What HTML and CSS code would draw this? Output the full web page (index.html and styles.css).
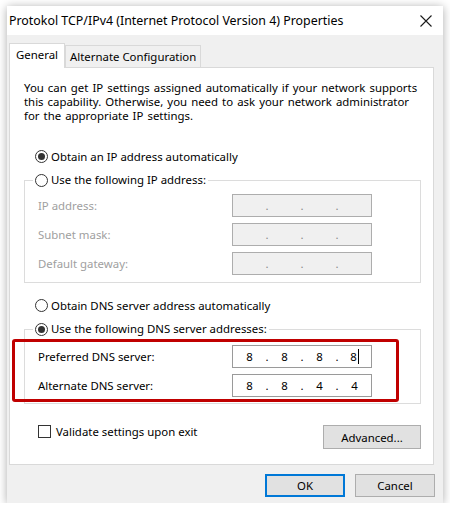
FILE: index.html
```html
<!DOCTYPE html>
<html>
<head>
<meta charset="utf-8">
<link rel="stylesheet" href="styles.css">
</head>
<body>
<div class="window">
  <div class="titlebar">
    <span class="title">Protokol TCP/IPv4 (Internet Protocol Version 4) Properties</span>
    <svg class="close" width="12" height="12" viewBox="0 0 12 12"><path d="M0.5 0.5L11.5 11.5M11.5 0.5L0.5 11.5" stroke="#1a1a1a" stroke-width="1.1" fill="none"/></svg>
  </div>
  <div class="body">
    <div class="tabs">
      <div class="tab active">General</div>
      <div class="tab">Alternate Configuration</div>
    </div>
    <div class="panel">
      <p class="intro">You can get IP settings assigned automatically if your network supports<br>this capability. Otherwise, you need to ask your network administrator<br>for the appropriate IP settings.</p>

      <div class="opt top1"><span class="radio checked"></span><span>Obtain an IP address automatically</span></div>

      <fieldset class="group g1">
        <legend><span class="opt"><span class="radio"></span><span>Use the following IP address:</span></span></legend>
        <div class="rows">
          <div class="field disabled"><span class="label">IP address:</span><span class="ip off"><span class="seg"></span><span class="dot">.</span><span class="seg"></span><span class="dot">.</span><span class="seg"></span><span class="dot">.</span><span class="seg"></span></span></div>
          <div class="field disabled"><span class="label">Subnet mask:</span><span class="ip off"><span class="seg"></span><span class="dot">.</span><span class="seg"></span><span class="dot">.</span><span class="seg"></span><span class="dot">.</span><span class="seg"></span></span></div>
          <div class="field disabled"><span class="label">Default gateway:</span><span class="ip off"><span class="seg"></span><span class="dot">.</span><span class="seg"></span><span class="dot">.</span><span class="seg"></span><span class="dot">.</span><span class="seg"></span></span></div>
        </div>
      </fieldset>

      <div class="opt top3"><span class="radio"></span><span>Obtain DNS server address automatically</span></div>

      <fieldset class="group g2">
        <legend><span class="opt"><span class="radio checked"></span><span>Use the following DNS server addresses:</span></span></legend>
        <div class="highlight">
          <div class="field"><span class="label">Preferred DNS server:</span><span class="ip"><span class="seg">8</span><span class="dot">.</span><span class="seg">8</span><span class="dot">.</span><span class="seg">8</span><span class="dot">.</span><span class="seg">8<span class="caret"></span></span></span></div>
          <div class="field"><span class="label">Alternate DNS server:</span><span class="ip"><span class="seg">8</span><span class="dot">.</span><span class="seg">8</span><span class="dot">.</span><span class="seg">4</span><span class="dot">.</span><span class="seg">4</span></span></div>
        </div>
      </fieldset>

      <div class="bottom-row">
        <div class="check"><span class="box"></span><span>Validate settings upon exit</span></div>
        <button class="btn adv">Advanced...</button>
      </div>
    </div>
    <div class="buttons">
      <button class="btn default">OK</button>
      <button class="btn">Cancel</button>
    </div>
  </div>
</div>
</body>
</html>
```

FILE: styles.css
```css
* { box-sizing: border-box; }
html, body { margin: 0; padding: 0; background: #fff; }
body {
  font-family: "Noto Sans", "Segoe UI", sans-serif;
  font-size: 11.4px;
  color: #000;
}
.window {
  margin: 6px 0 0 7px;
  width: 436px;
  height: 497px;
  background: #f0f0f0;
  box-shadow: 0 1px 9px rgba(0,0,0,0.33);
  display: flex;
  flex-direction: column;
}
.titlebar {
  height: 29px;
  background: #fff;
  display: flex;
  align-items: center;
  justify-content: space-between;
  padding: 0 11px 0 2px;
}
.title { font-size: 12.4px; color: #000; }
.close { display: block; }
.body {
  flex: 1;
  padding: 8px 9px 6px 2px;
  display: flex;
  flex-direction: column;
}
.tabs {
  display: flex;
  align-items: flex-end;
  height: 25px;
  margin-bottom: -1px;
  position: relative;
  z-index: 1;
}
.tab {
  height: 22px;
  margin-bottom: 1px;
  border: 1px solid #d9d9d9;
  border-bottom: none;
  padding: 0 4px;
  line-height: 21px;
  background: #f0f0f0;
}
.tab.active {
  height: 25px;
  margin-bottom: 0;
  background: #fff;
  padding: 0 6px;
  line-height: 22px;
}
.panel {
  height: 398px;
  background: #fff;
  border: 1px solid #d9d9d9;
  padding: 13px 12px 0 14px;
}
.intro {
  margin: 0;
  line-height: 14px;
  white-space: nowrap;
  word-spacing: 1.1px;
}
.opt {
  display: flex;
  align-items: center;
  height: 16px;
  gap: 3px;
  white-space: nowrap;
}
.top1 { margin-top: 25px; padding-left: 11px; }
.top3 { margin-top: 14px; padding-left: 11px; }
.radio {
  width: 13px;
  height: 13px;
  border: 1px solid #333;
  border-radius: 50%;
  display: flex;
  align-items: center;
  justify-content: center;
  flex: none;
  background: #fff;
}
.radio.checked::after {
  content: "";
  width: 7px;
  height: 7px;
  border-radius: 50%;
  background: #333;
}
.group {
  margin: 8px 0 0 0;
  border: 1px solid #dcdcdc;
  padding: 0;
  min-width: 0;
}
.group legend {
  margin-left: 8px;
  padding: 0 2px;
  line-height: 16px;
}
.g1 .rows {
  padding: 6px 0 7px 13px;
  display: flex;
  flex-direction: column;
  gap: 6px;
}
.field {
  display: flex;
  align-items: center;
  height: 23px;
}
.label { width: 194px; flex: none; }
.field.disabled .label { color: #a0a0a0; }
.ip {
  display: flex;
  align-items: center;
  width: 140px;
  height: 23px;
  border: 1px solid #9a9a9a;
  background: #fff;
}
.ip.off {
  background: #f0f0f0;
  border-color: #adadad;
}
.seg { width: 33px; text-align: center; }
.dot {
  width: 2px;
  display: flex;
  justify-content: center;
}
.ip.off .dot { color: #8a8a8a; }
.caret {
  display: inline-block;
  width: 1px;
  height: 15px;
  background: #000;
  vertical-align: -3px;
  margin-left: 1px;
}
.g2 { margin-top: 8px; padding-bottom: 1px; }
.highlight {
  margin: 2px 0 0 -13px;
  width: 387px;
  border: 3px solid #c00000;
  border-radius: 3px;
  padding: 3px 0 2px 23px;
  display: flex;
  flex-direction: column;
  gap: 6px;
}
.bottom-row {
  margin-top: 20px;
  display: flex;
  justify-content: space-between;
  align-items: flex-start;
}
.check {
  display: flex;
  align-items: center;
  gap: 5px;
  padding-left: 14px;
  height: 15px;
}
.box {
  width: 13px;
  height: 13px;
  border: 1px solid #333;
  background: #fff;
  flex: none;
}
.btn {
  font-family: inherit;
  font-size: 11.4px;
  color: #000;
  background: #e1e1e1;
  border: 1px solid #adadad;
  height: 23px;
  width: 80px;
  padding: 0;
  margin: 0;
}
.adv { width: 98px; height: 24px; margin-top: 1px; }
.buttons {
  margin-top: 9px;
  margin-right: -1px;
  display: flex;
  justify-content: flex-end;
  gap: 10px;
}
.btn.default {
  border-color: #0078d7;
  box-shadow: inset 0 0 0 1px #0078d7;
}
```
